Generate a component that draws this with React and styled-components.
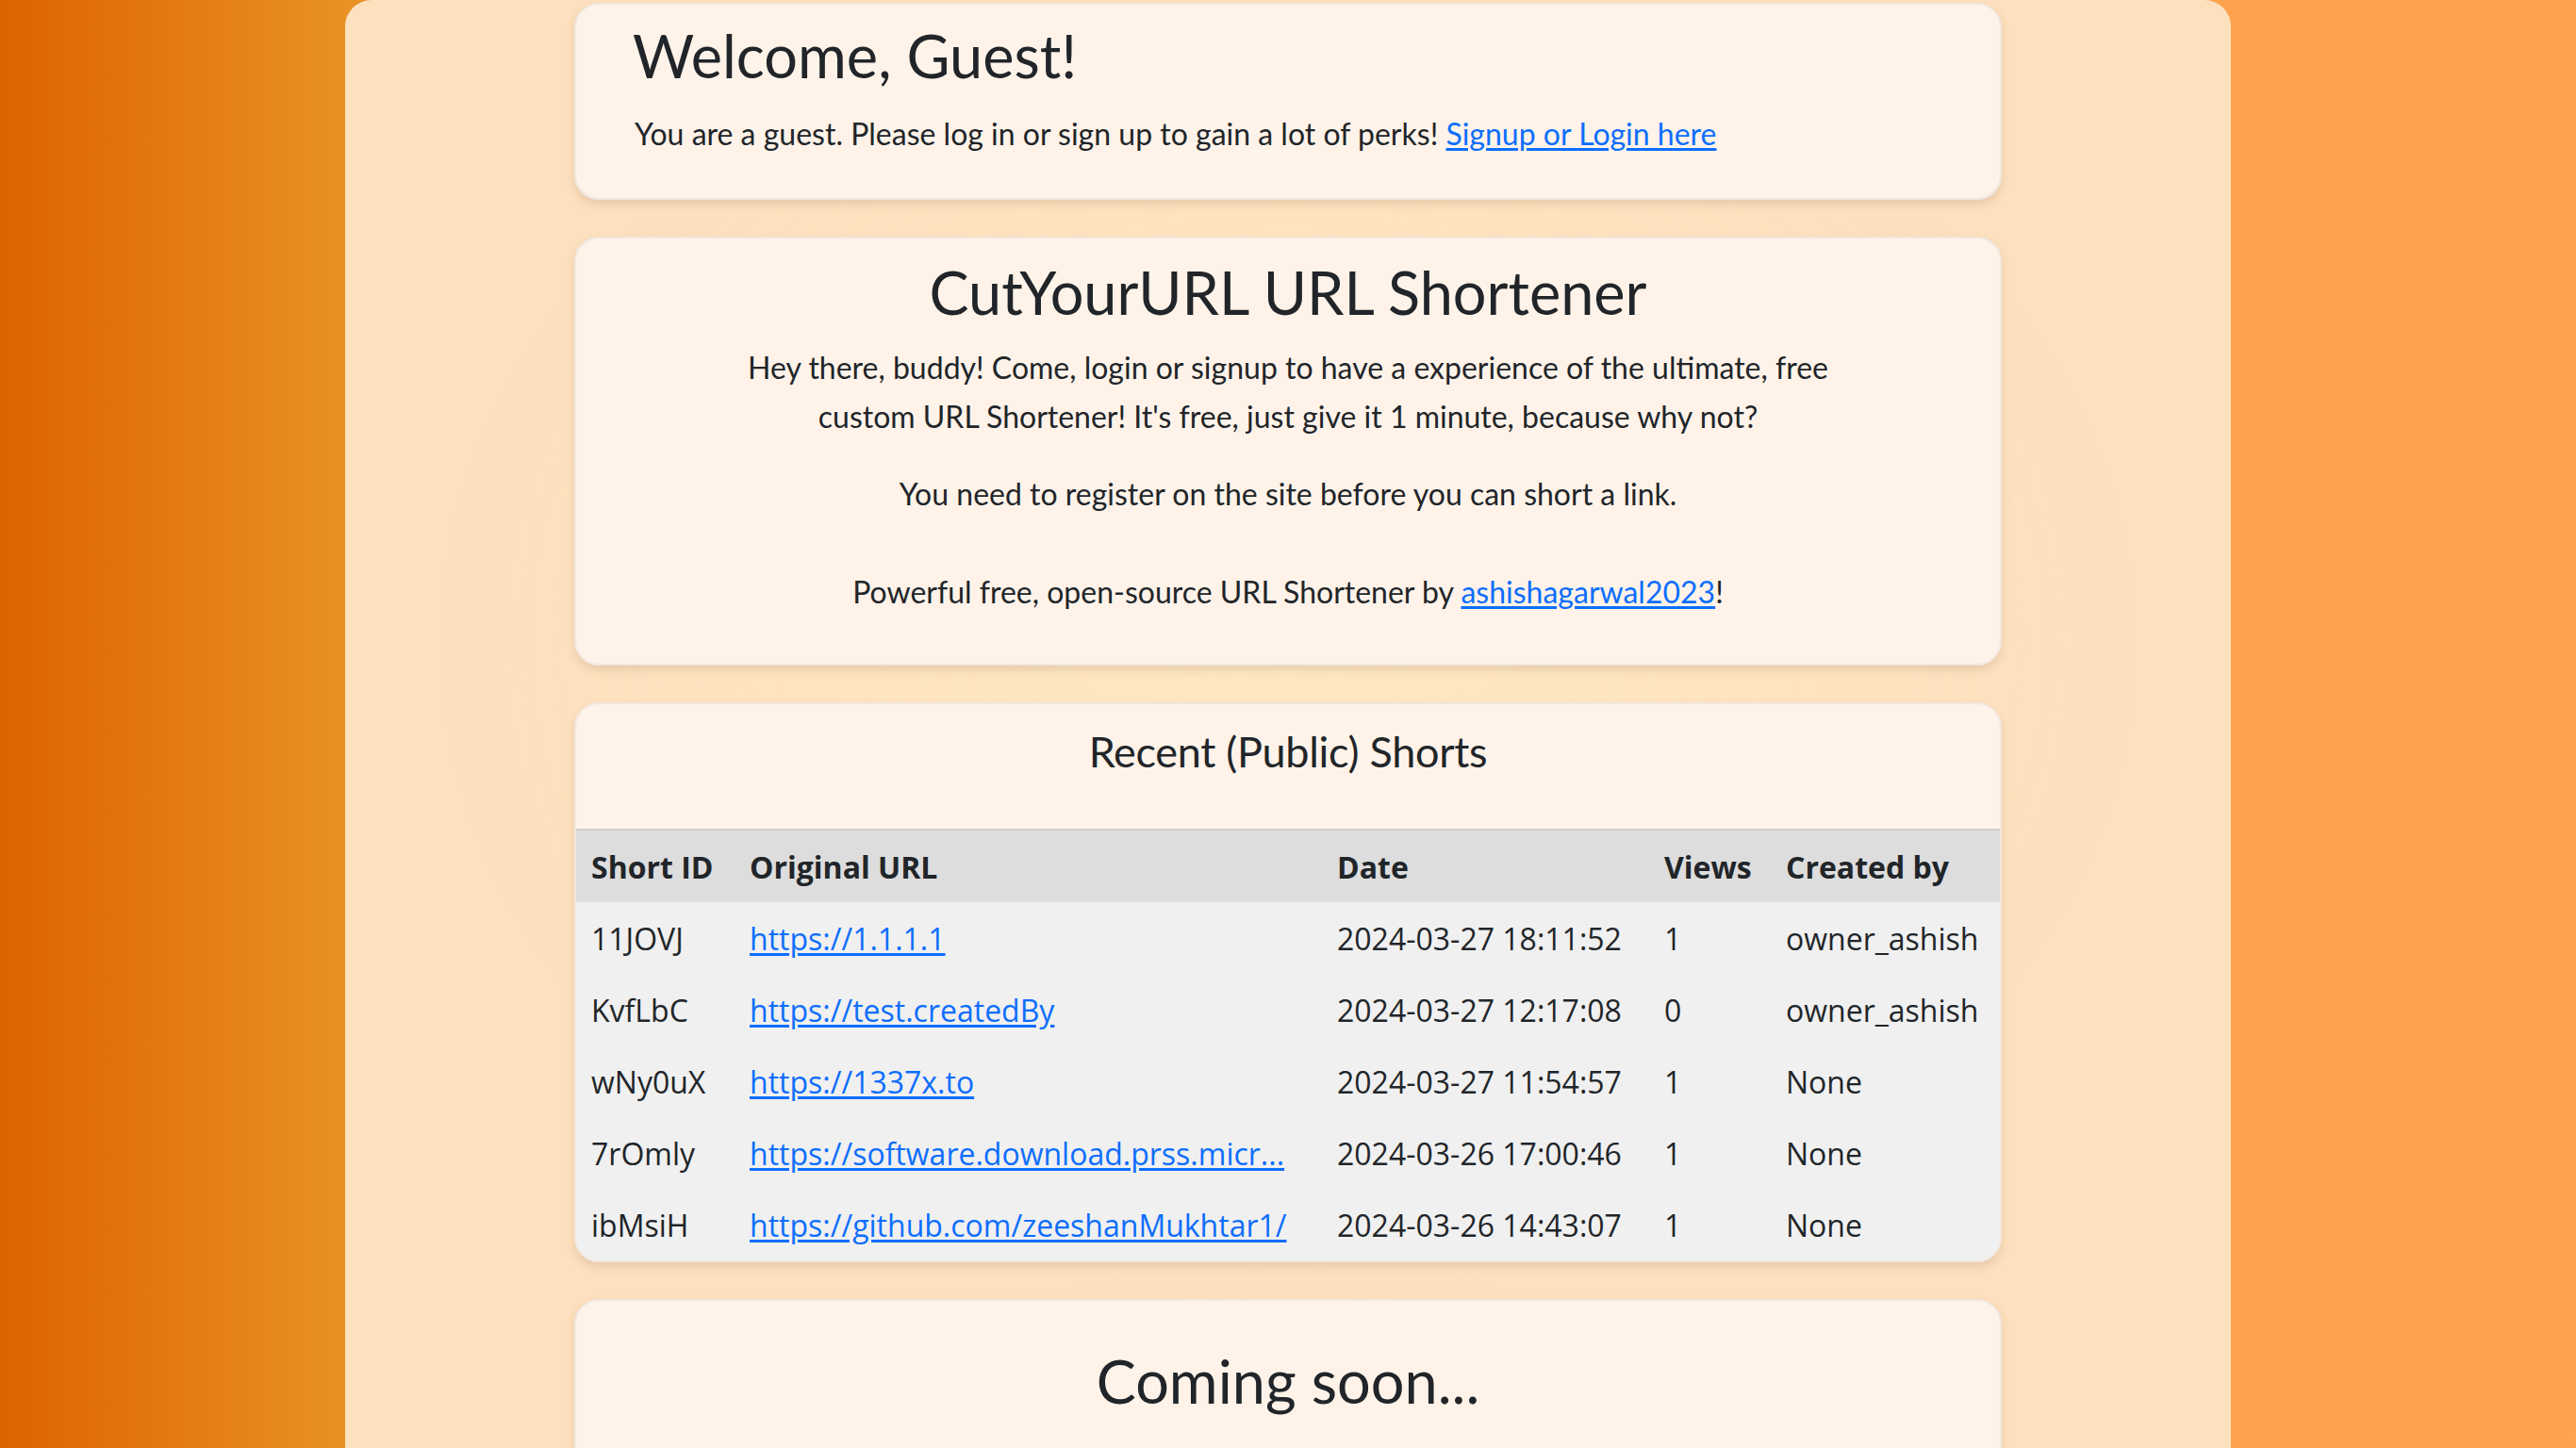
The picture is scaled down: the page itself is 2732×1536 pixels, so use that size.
import React from 'react'
import styled, { createGlobalStyle } from 'styled-components'

const shorts = [
  { id: '11JOVJ', url: 'https://1.1.1.1', date: '2024-03-27 18:11:52', views: 1, by: 'owner_ashish' },
  { id: 'KvfLbC', url: 'https://test.createdBy', date: '2024-03-27 12:17:08', views: 0, by: 'owner_ashish' },
  { id: 'wNy0uX', url: 'https://1337x.to', date: '2024-03-27 11:54:57', views: 1, by: 'None' },
  { id: '7rOmly', url: 'https://software.download.prss.micr...', date: '2024-03-26 17:00:46', views: 1, by: 'None' },
  { id: 'ibMsiH', url: 'https://github.com/zeeshanMukhtar1/', date: '2024-03-26 14:43:07', views: 1, by: 'None' },
]

function App() {
  return (
    <Page>
      <GlobalStyle />
      <Container>
        <Card>
          <WelcomeBody>
            <Welcome>Welcome, Guest!</Welcome>
            <Text>
              You are a guest. Please log in or sign up to gain a lot of perks!{' '}
              <Link href="#">Signup or Login here</Link>
            </Text>
          </WelcomeBody>
        </Card>

        <Card>
          <IntroBody>
            <Title>CutYourURL URL Shortener</Title>
            <Lead>
              Hey there, buddy! Come, login or signup to have a experience of the ultimate, free
              <br />
              custom URL Shortener! It's free, just give it 1 minute, because why not?
            </Lead>
            <Lead>You need to register on the site before you can short a link.</Lead>
            <Credit>
              Powerful free, open-source URL Shortener by <Link href="#">ashishagarwal2023</Link>!
            </Credit>
          </IntroBody>
        </Card>

        <Card>
          <CardHeader>
            <SubTitle>Recent (Public) Shorts</SubTitle>
          </CardHeader>
          <Table>
            <colgroup>
              <col style={{ width: 168 }} />
              <col style={{ width: 623 }} />
              <col style={{ width: 347 }} />
              <col style={{ width: 129 }} />
              <col />
            </colgroup>
            <thead>
              <tr>
                <Th>Short ID</Th>
                <Th>Original URL</Th>
                <Th>Date</Th>
                <Th>Views</Th>
                <Th>Created by</Th>
              </tr>
            </thead>
            <tbody>
              {shorts.map((s) => (
                <tr key={s.id}>
                  <Td>{s.id}</Td>
                  <Td>
                    <Link href="#">{s.url}</Link>
                  </Td>
                  <Td>{s.date}</Td>
                  <Td>{s.views}</Td>
                  <Td>{s.by}</Td>
                </tr>
              ))}
            </tbody>
          </Table>
        </Card>

        <Card>
          <SoonBody>
            <Soon>Coming soon...</Soon>
          </SoonBody>
        </Card>
      </Container>
    </Page>
  )
}

export default App

const GlobalStyle = createGlobalStyle`
  html, body {
    margin: 0;
    padding: 0;
    height: 100%;
    overflow: hidden;
  }
  body {
    font-family: Lato, "Noto Sans", sans-serif;
    color: #212529;
  }
`

const Page = styled.div`
  min-height: 100vh;
  background: linear-gradient(to right, #dd6300 0%, #e99123 13.4%, #fdb66c 50%, #ffa24e 86.6%, #ffa34f 100%);
`

const Container = styled.div`
  width: 2000px;
  min-height: 100vh;
  margin: 0 auto;
  padding-top: 3px;
  box-sizing: border-box;
  display: flex;
  flex-direction: column;
  align-items: center;
  gap: 39px;
  border-radius: 28px 28px 0 0;
  background:
    radial-gradient(ellipse 900px 700px at 50% 40%, #ffe8c0 0%, rgba(255, 232, 192, 0) 100%),
    #fde0be;
`

const Card = styled.div`
  width: 1514px;
  box-sizing: border-box;
  background: #fff3e9;
  border: 2px solid #f1e7de;
  border-radius: 26px;
  box-shadow: 0 5px 10px rgba(120, 90, 60, 0.16);
  overflow: hidden;
  flex-shrink: 0;
`

const WelcomeBody = styled.div`
  padding: 16px 60px 44px;
`

const Welcome = styled.h1`
  margin: 0;
  font-size: 63px;
  font-weight: 400;
  line-height: 1.2;
`

const Text = styled.p`
  margin: 21px 0 0 2px;
  font-size: 32px;
  line-height: 1.5;
`

const Link = styled.a`
  color: #0d6efd;
  text-decoration: underline;
  text-underline-offset: 3px;
`

const IntroBody = styled.div`
  padding: 19px 60px 50px;
  text-align: center;
`

const Title = styled.h1`
  margin: 0 0 17px;
  font-size: 63px;
  font-weight: 400;
  line-height: 1.2;
`

const Lead = styled.p`
  margin: 0 0 30px;
  font-size: 32px;
  line-height: 52px;
`

const Credit = styled.p`
  margin: 52px 0 0;
  font-size: 32px;
  line-height: 52px;
`

const CardHeader = styled.div`
  height: 134px;
  display: flex;
  align-items: center;
  justify-content: center;
  padding-bottom: 32px;
  box-sizing: border-box;
  border-bottom: 2px solid #cfcfcf;
`

const SubTitle = styled.h3`
  margin: 0;
  font-size: 45px;
  font-weight: 400;
  letter-spacing: -0.3px;
`

const Table = styled.table`
  width: 100%;
  border-collapse: collapse;
  table-layout: fixed;
  font-family: "Open Sans", "Noto Sans", sans-serif;
  font-size: 32px;
  color: #212529;

  thead tr {
    background: #dddddd;
  }
  tbody tr {
    background: #f0f0f0;
  }
`

const Th = styled.th`
  height: 76px;
  padding: 0 16px;
  text-align: left;
  font-weight: 700;
  white-space: nowrap;
`

const Td = styled.td`
  height: 76px;
  padding: 0 16px;
  white-space: nowrap;
  overflow: hidden;
`

const SoonBody = styled.div`
  padding: 47px 60px 200px;
  text-align: center;
`

const Soon = styled.h2`
  margin: 0;
  font-size: 63px;
  font-weight: 400;
`
